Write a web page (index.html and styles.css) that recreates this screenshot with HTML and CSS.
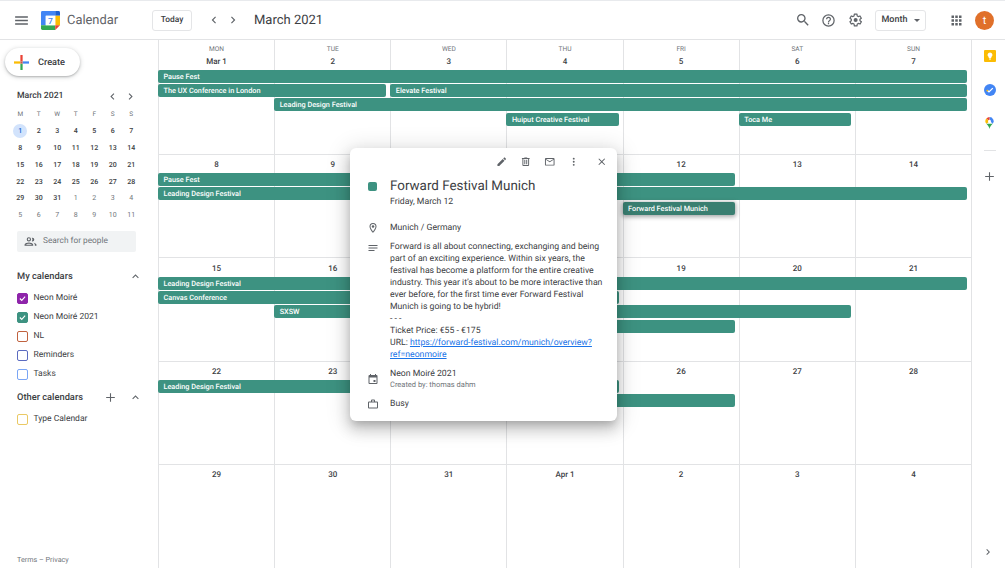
FILE: index.html
```html
<!DOCTYPE html>
<html lang="en">
<head>
<meta charset="utf-8">
<title>Calendar</title>
<link rel="stylesheet" href="styles.css">
</head>
<body>
<div class="app">
  <header class="topbar">
    <svg class="ic menu" viewBox="0 0 24 24"><path d="M3 18h18v-2H3zm0-5h18v-2H3zm0-7v2h18V6z"/></svg>
    <svg class="logo" viewBox="0 0 20 20">
      <path d="M1.5 0H15v5H5v10H0V1.500A1.500 1.500 0 0 1 1.500 0z" fill="#4285f4"/>
      <path d="M15 0h3.500A1.500 1.500 0 0 1 20 1.500V5h-5z" fill="#1a5fd0"/>
      <path d="M15 5h5v10h-5z" fill="#fbbc04"/>
      <path d="M5 15h10v5H1.500A1.500 1.500 0 0 1 0 18.500V15z" fill="#34a853"/>
      <path d="M15 15h5l-5 5z" fill="#ea4335"/>
      <path d="M5 5h10v10H5z" fill="#fff"/>
      <text x="10" y="13.500" text-anchor="middle" class="logo-num">7</text>
    </svg>
    <span class="brand">Calendar</span>
    <button class="btn today">Today</button>
    <svg class="ic nav-prev" viewBox="0 0 24 24"><path d="M15.400 7.400 14 6l-6 6 6 6 1.400-1.400L10.800 12z"/></svg>
    <svg class="ic nav-next" viewBox="0 0 24 24"><path d="M8.600 16.600 10 18l6-6-6-6-1.400 1.400 4.600 4.600z"/></svg>
    <span class="month-title">March 2021</span>
    <svg class="ic act-search" viewBox="0 0 24 24"><path d="M15.500 14h-.79l-.28-.27A6.471 6.471 0 0 0 16 9.500 6.500 6.500 0 1 0 9.500 16c1.610 0 3.090-.59 4.230-1.570l.27.28v.79l5 4.990L20.490 19l-4.990-5zm-6 0C7.010 14 5 11.990 5 9.500S7.010 5 9.500 5 14 7.010 14 9.500 11.990 14 9.500 14z"/></svg>
    <svg class="ic act-help" viewBox="0 0 24 24"><path d="M11 18h2v-2h-2zm1-16a10 10 0 1 0 0 20 10 10 0 0 0 0-20zm0 18a8 8 0 1 1 0-16 8 8 0 0 1 0 16zm0-14a4 4 0 0 0-4 4h2a2 2 0 1 1 4 0c0 2-3 1.750-3 5h2c0-2.250 3-2.500 3-5a4 4 0 0 0-4-4z"/></svg>
    <svg class="ic act-gear" viewBox="0 0 24 24"><path d="M19.400 13a7.500 7.500 0 0 0 0-2l2.100-1.600-2-3.500-2.500 1a7.500 7.500 0 0 0-1.700-1L15 3.300h-4l-.4 2.600a7.500 7.500 0 0 0-1.700 1l-2.500-1-2 3.500L6.500 11a7.500 7.500 0 0 0 0 2l-2.100 1.600 2 3.500 2.500-1a7.500 7.500 0 0 0 1.700 1l.4 2.600h4l.4-2.600a7.500 7.500 0 0 0 1.700-1l2.500 1 2-3.500z" fill="none" stroke="currentColor" stroke-width="1.800" stroke-linejoin="round"/><circle cx="12.950" cy="12" r="3"/></svg>
    <button class="btn view">Month<span class="caret"></span></button>
    <svg class="ic act-apps" viewBox="0 0 24 24"><path d="M4 8h4V4H4zm6 12h4v-4h-4zm-6 0h4v-4H4zm0-6h4v-4H4zm6 0h4v-4h-4zm6-10v4h4V4zm-6 4h4V4h-4zm6 6h4v-4h-4zm0 6h4v-4h-4z"/></svg>
    <span class="avatar">t</span>
  </header>

  <div class="body">
    <aside class="sidebar">
      <button class="create">
        <svg class="create-plus" viewBox="0 0 16 16">
          <path d="M6.800 0h2.400v6.800H6.800z" fill="#ea4335"/>
          <path d="M9.200 6.800H16v2.400H9.200z" fill="#4285f4"/>
          <path d="M6.800 9.200h2.400V16H6.800z" fill="#34a853"/>
          <path d="M0 6.800h6.800v2.400H0z" fill="#fbbc04"/>
          <path d="M6.800 6.800h2.400v2.400H6.800z" fill="#c9574a"/>
        </svg>
        <span>Create</span>
      </button>

      <div class="mini-head">
        <span class="mini-title">March 2021</span>
        <svg class="ic mini-nav" viewBox="0 0 24 24"><path d="M15.400 7.400 14 6l-6 6 6 6 1.400-1.400L10.800 12z"/></svg>
        <svg class="ic mini-nav" viewBox="0 0 24 24"><path d="M8.600 16.600 10 18l6-6-6-6-1.400 1.400 4.600 4.600z"/></svg>
      </div>
      <div class="mini-grid">
        <span class="dow">M</span><span class="dow">T</span><span class="dow">W</span><span class="dow">T</span><span class="dow">F</span><span class="dow">S</span><span class="dow">S</span>
        <span class="today-mini">1</span><span>2</span><span>3</span><span>4</span><span>5</span><span>6</span><span>7</span>
        <span>8</span><span>9</span><span>10</span><span>11</span><span>12</span><span>13</span><span>14</span>
        <span>15</span><span>16</span><span>17</span><span>18</span><span>19</span><span>20</span><span>21</span>
        <span>22</span><span>23</span><span>24</span><span>25</span><span>26</span><span>27</span><span>28</span>
        <span>29</span><span>30</span><span>31</span><span class="off">1</span><span class="off">2</span><span class="off">3</span><span class="off">4</span>
        <span class="off">5</span><span class="off">6</span><span class="off">7</span><span class="off">8</span><span class="off">9</span><span class="off">10</span><span class="off">11</span>
      </div>

      <div class="people">
        <svg class="ic people-ic" viewBox="0 0 24 24"><path d="M9 12a4 4 0 1 0 0-8 4 4 0 0 0 0 8zm0-6a2 2 0 1 1 0 4 2 2 0 0 1 0-4zm6.500 6a3.500 3.500 0 0 0 0-7c-.4 0-.7.100-1 .2a5.800 5.800 0 0 1 0 6.600c.3.100.6.200 1 .2zM9 14c-2.700 0-8 1.300-8 4v2h16v-2c0-2.700-5.300-4-8-4zm-6 4c.2-.7 3.300-2 6-2s5.800 1.300 6 2zm14.600-3.800c1.300.9 2.400 2.100 2.400 3.800v2h3v-2c0-2.100-3.300-3.400-5.400-3.800z"/></svg>
        <span>Search for people</span>
      </div>

      <div class="cal-head first">
        <span>My calendars</span>
        <svg class="ic chev" viewBox="0 0 24 24"><path d="M7.400 15.400 6 14l6-6 6 6-1.400 1.400L12 10.800z"/></svg>
      </div>
      <ul class="cal-list">
        <li><span class="box purple checked"><svg viewBox="0 0 12 12"><path d="m2.500 6 2.500 2.500 4.500-5" /></svg></span>Neon Moiré</li>
        <li><span class="box teal checked"><svg viewBox="0 0 12 12"><path d="m2.500 6 2.500 2.500 4.500-5" /></svg></span>Neon Moiré 2021</li>
        <li><span class="box rust"></span>NL</li>
        <li><span class="box indigo"></span>Reminders</li>
        <li><span class="box sky"></span>Tasks</li>
      </ul>
      <div class="cal-head other">
        <span>Other calendars</span>
        <svg class="ic cal-add" viewBox="0 0 24 24"><path d="M20 13h-7v7h-2v-7H4v-2h7V4h2v7h7z"/></svg>
        <svg class="ic chev" viewBox="0 0 24 24"><path d="M7.400 15.400 6 14l6-6 6 6-1.400 1.400L12 10.800z"/></svg>
      </div>
      <ul class="cal-list other-list">
        <li><span class="box sand"></span>Type Calendar</li>
      </ul>
      <div class="terms">Terms – Privacy</div>
    </aside>

    <main class="month">
      <section class="week week-first">
        <div class="day"><span class="dname">MON</span><span class="dnum">Mar 1</span></div>
        <div class="day"><span class="dname">TUE</span><span class="dnum">2</span></div>
        <div class="day"><span class="dname">WED</span><span class="dnum">3</span></div>
        <div class="day"><span class="dname">THU</span><span class="dnum">4</span></div>
        <div class="day"><span class="dname">FRI</span><span class="dnum">5</span></div>
        <div class="day"><span class="dname">SAT</span><span class="dnum">6</span></div>
        <div class="day"><span class="dname">SUN</span><span class="dnum">7</span></div>
        <div class="ev r2 c1-7">Pause Fest</div>
        <div class="ev r3 c1-2">The UX Conference in London</div>
        <div class="ev r3 c3-7">Elevate Festival</div>
        <div class="ev r4 c2-7">Leading Design Festival</div>
        <div class="ev r5 c4-4">Huiput Creative Festival</div>
        <div class="ev r5 c6-6">Toca Me</div>
      </section>
      <section class="week">
        <div class="day"><span class="dnum">8</span></div>
        <div class="day"><span class="dnum">9</span></div>
        <div class="day"><span class="dnum">10</span></div>
        <div class="day"><span class="dnum">11</span></div>
        <div class="day"><span class="dnum">12</span></div>
        <div class="day"><span class="dnum">13</span></div>
        <div class="day"><span class="dnum">14</span></div>
        <div class="ev r2 c1-5">Pause Fest</div>
        <div class="ev r3 c1-7">Leading Design Festival</div>
        <div class="ev r4 c5-5 selected">Forward Festival Munich</div>
      </section>
      <section class="week">
        <div class="day"><span class="dnum">15</span></div>
        <div class="day"><span class="dnum">16</span></div>
        <div class="day"><span class="dnum">17</span></div>
        <div class="day"><span class="dnum">18</span></div>
        <div class="day"><span class="dnum">19</span></div>
        <div class="day"><span class="dnum">20</span></div>
        <div class="day"><span class="dnum">21</span></div>
        <div class="ev r2 c1-7">Leading Design Festival</div>
        <div class="ev r3 c1-4">Canvas Conference</div>
        <div class="ev r4 c2-6">SXSW</div>
        <div class="ev r5 c4-5"></div>
      </section>
      <section class="week">
        <div class="day"><span class="dnum">22</span></div>
        <div class="day"><span class="dnum">23</span></div>
        <div class="day"><span class="dnum">24</span></div>
        <div class="day"><span class="dnum">25</span></div>
        <div class="day"><span class="dnum">26</span></div>
        <div class="day"><span class="dnum">27</span></div>
        <div class="day"><span class="dnum">28</span></div>
        <div class="ev r2 c1-4">Leading Design Festival</div>
        <div class="ev r3 c4-5"></div>
      </section>
      <section class="week">
        <div class="day"><span class="dnum">29</span></div>
        <div class="day"><span class="dnum">30</span></div>
        <div class="day"><span class="dnum">31</span></div>
        <div class="day"><span class="dnum">Apr 1</span></div>
        <div class="day"><span class="dnum">2</span></div>
        <div class="day"><span class="dnum">3</span></div>
        <div class="day"><span class="dnum">4</span></div>
      </section>
    </main>

    <aside class="rail">
      <svg class="rail-keep" viewBox="0 0 12 12"><rect width="12" height="12" rx="1" fill="#fbbc04"/><path d="M6 2.500a2.500 2.500 0 0 0-1.300 4.600V8h2.600v-.9A2.500 2.500 0 0 0 6 2.500zM5 8.600h2v.9H5z" fill="#fff"/></svg>
      <svg class="rail-tasks" viewBox="0 0 12 12"><circle cx="6" cy="6" r="6" fill="#4285f4"/><path d="m3.300 6.200 1.700 1.700 3.800-3.800" fill="none" stroke="#fff" stroke-width="1.300"/><circle cx="3.300" cy="6.600" r=".9" fill="#fbbc04"/></svg>
      <svg class="rail-maps" viewBox="0 0 12 16"><path d="M6 0a5.500 5.500 0 0 1 4.200 9L6 4.500z" fill="#4285f4"/><path d="M6 0a5.500 5.500 0 0 0-4.200 2L6 6z" fill="#ea4335"/><path d="M1.800 2A5.500 5.500 0 0 0 1.800 9L6 6z" fill="#fbbc04"/><path d="M1.800 9 10.200 9C8 11.500 6.500 13 6 16 5.500 13 4 11.500 1.800 9z" fill="#34a853"/><circle cx="6" cy="5.500" r="1.900" fill="#fff"/></svg>
      <span class="rail-sep"></span>
      <svg class="ic rail-add" viewBox="0 0 24 24"><path d="M20 13h-7v7h-2v-7H4v-2h7V4h2v7h7z"/></svg>
      <svg class="ic rail-open" viewBox="0 0 24 24"><path d="M8.600 16.600 10 18l6-6-6-6-1.400 1.400 4.600 4.600z"/></svg>
    </aside>
  </div>

  <article class="popup">
    <div class="pop-tools">
      <svg class="ic tool" viewBox="0 0 24 24"><path d="M3 17.250V21h3.750L17.800 9.950 14.050 6.200zM20.700 7a1 1 0 0 0 0-1.400l-2.300-2.300a1 1 0 0 0-1.400 0l-1.850 1.850 3.750 3.750z"/></svg>
      <svg class="ic tool" viewBox="0 0 24 24"><path d="M15 4V3H9v1H4v2h1v13a2 2 0 0 0 2 2h10a2 2 0 0 0 2-2V6h1V4zm2 15H7V6h10zM9 8h2v9H9zm4 0h2v9h-2z"/></svg>
      <svg class="ic tool" viewBox="0 0 24 24"><path d="M20 4H4a2 2 0 0 0-2 2v12a2 2 0 0 0 2 2h16a2 2 0 0 0 2-2V6a2 2 0 0 0-2-2zm0 14H4V8l8 5 8-5zm-8-7L4 6h16z"/></svg>
      <svg class="ic tool" viewBox="0 0 24 24"><circle cx="12" cy="5.500" r="2"/><circle cx="12" cy="12" r="2"/><circle cx="12" cy="18.500" r="2"/></svg>
      <svg class="ic tool tool-close" viewBox="0 0 24 24"><path d="M19 6.400 17.600 5 12 10.600 6.400 5 5 6.400 10.600 12 5 17.600 6.400 19l5.600-5.600 5.600 5.600 1.400-1.400-5.600-5.600z"/></svg>
    </div>
    <div class="pop-row pop-title">
      <span class="pop-swatch"></span>
      <div>
        <h2>Forward Festival Munich</h2>
        <p class="pop-date">Friday, March 12</p>
      </div>
    </div>
    <div class="pop-row pop-loc">
      <svg class="ic pop-ic" viewBox="0 0 24 24"><path d="M12 2a7 7 0 0 0-7 7c0 5.250 7 13 7 13s7-7.750 7-13a7 7 0 0 0-7-7zM7 9a5 5 0 0 1 10 0c0 2.900-2.900 7.200-5 9.900C9.900 16.200 7 11.900 7 9z"/><circle cx="12" cy="9" r="2.500"/></svg>
      <p>Munich / Germany</p>
    </div>
    <div class="pop-row pop-desc">
      <svg class="ic pop-ic" viewBox="0 0 24 24"><path d="M3 18h12v-2H3zM3 6v2h18V6zm0 7h18v-2H3z"/></svg>
      <p>Forward is all about connecting, exchanging and being<br>part of an exciting experience. Within six years, the<br>festival has become a platform for the entire creative<br>industry. This year it’s about to be more interactive than<br>ever before, for the first time ever Forward Festival<br>Munich is going to be hybrid!<br>- - -<br>Ticket Price: €55 - €175<br>URL: <a href="#">https://forward-festival.com/munich/overview?<br>ref=neonmoire</a></p>
    </div>
    <div class="pop-row pop-cal">
      <svg class="ic pop-ic" viewBox="0 0 24 24"><path d="M19 4h-1V2h-2v2H8V2H6v2H5a2 2 0 0 0-2 2v14a2 2 0 0 0 2 2h14a2 2 0 0 0 2-2V6a2 2 0 0 0-2-2zm0 16H5V9h14zm-6-6h4v4h-4z"/></svg>
      <div>
        <p>Neon Moiré 2021</p>
        <p class="pop-small">Created by: thomas dahm</p>
      </div>
    </div>
    <div class="pop-row pop-busy">
      <svg class="ic pop-ic" viewBox="0 0 24 24"><path d="M20 7h-4V5a2 2 0 0 0-2-2h-4a2 2 0 0 0-2 2v2H4a2 2 0 0 0-2 2v10a2 2 0 0 0 2 2h16a2 2 0 0 0 2-2V9a2 2 0 0 0-2-2zM10 5h4v2h-4zm10 14H4V9h16z"/></svg>
      <p>Busy</p>
    </div>
  </article>
</div>
</body>
</html>
```

FILE: styles.css
```css
* { box-sizing: border-box; }
html, body { margin: 0; height: 100%; overflow: hidden; background: #fff; }
body { font-family: Roboto, "Liberation Sans", sans-serif; color: #3c4043; text-rendering: geometricPrecision; }
p, h2, ul { margin: 0; padding: 0; }
button { font-family: inherit; background: #fff; cursor: pointer; text-rendering: geometricPrecision; }

.app { position: relative; width: 1005px; height: 568px; display: flex; flex-direction: column; }
.ic { fill: #5f6368; color: #5f6368; flex: none; display: block; }

/* top bar */
.topbar { height: 40px; flex: none; display: flex; align-items: center; border-top: 1px solid #e8eaed; border-bottom: 1px solid #e2e3e5; padding-left: 13px; }
.menu { width: 17px; height: 17px; }
.logo { width: 19px; height: 19px; margin-left: 11px; flex: none; }
.logo-num { font: 500 9px Roboto, sans-serif; fill: #4285f4; }
.brand { margin-left: 7px; font-size: 12.900px; color: #5f6368; width: 85px; }
.btn { height: 21px; border: 1px solid #e4e5e7; border-radius: 3px; font-size: 9px; font-weight: 500; color: #3c4043; padding: 0; }
.today { width: 40px; font-size: 8.400px; }
.nav-prev { width: 14px; height: 14px; margin-left: 15px; }
.nav-next { width: 14px; height: 14px; margin-left: 5px; }
.month-title { margin-left: 14px; font-size: 13px; color: #3c4043; flex: 1; }
.act-search { width: 16px; height: 16px; }
.act-help { width: 15px; height: 15px; margin-left: 10px; }
.act-gear { width: 16px; height: 16px; margin-left: 11px; }
.view { width: 51px; margin-left: 12px; display: flex; align-items: center; justify-content: center; gap: 6px; }
.caret { width: 0; height: 0; border: 3px solid transparent; border-top-color: #5f6368; border-bottom: 0; }
.act-apps { width: 15px; height: 15px; margin-left: 23px; }
.avatar { width: 19px; height: 19px; border-radius: 50%; background: #e0702a; color: #fff; font-size: 11px; display: flex; align-items: center; justify-content: center; margin-left: 11px; margin-right: 11px; }

.body { flex: 1; display: flex; min-height: 0; }

/* sidebar */
.sidebar { width: 158px; flex: none; display: flex; flex-direction: column; padding: 8px 16px 0 17px; position: relative; }
.create { width: 75px; height: 28px; margin-left: -12px; border: 0; border-radius: 14px; display: flex; align-items: center; gap: 9px; padding: 0 0 0 9px; font-size: 9.200px; font-weight: 500; color: #3c4043; box-shadow: 0 1px 2px rgba(60,64,67,.3), 0 1px 4px 1px rgba(60,64,67,.15); }
.create-plus { width: 15px; height: 15px; flex: none; }
.mini-head { display: flex; align-items: center; height: 14px; margin-top: 13px; }
.mini-title { font-size: 8.700px; font-weight: 500; color: #3c4043; width: 90px; }
.mini-nav { width: 13px; height: 13px; margin-right: 5px; }
.mini-grid { display: grid; grid-template-columns: repeat(7, 18.500px); grid-auto-rows: 16.800px; width: 130px; margin-left: -6px; margin-top: 3px; font-size: 7px; font-weight: 500; color: #3c4043; }
.mini-grid span { display: flex; align-items: center; justify-content: center; }
.mini-grid .dow { font-size: 6.500px; color: #70757a; font-weight: 400; }
.mini-grid .off { color: #70757a; font-weight: 400; }
.mini-grid .today-mini { background: #d2e3fc; color: #1967d2; border-radius: 50%; width: 14px; height: 14px; justify-self: center; align-self: center; }
.people { width: 119px; height: 21px; background: #f1f3f4; border-radius: 2px; margin-top: 7px; display: flex; align-items: center; gap: 6px; padding-left: 7px; font-size: 8.300px; color: #70757a; }
.people-ic { width: 13px; height: 13px; }
.cal-head { display: flex; align-items: center; height: 14px; font-size: 9.300px; font-weight: 500; color: #3c4043; }
.cal-head.first { margin-top: 18px; }
.cal-head.other { margin-top: 7px; }
.cal-head span { flex: 1; }
.chev { width: 13px; height: 13px; margin-right: 0; }
.cal-add { width: 13px; height: 13px; margin-right: 7px; }
.cal-head .cal-add { margin-right: 7px; margin-left: -5px; margin-right: 12px; }
.cal-list { list-style: none; margin-top: 5px; }
.cal-list.other-list { margin-top: 5px; }
.cal-list li { height: 19px; display: flex; align-items: center; gap: 5.500px; font-size: 8.500px; color: #3c4043; }
.box { width: 11px; height: 11px; border-radius: 2px; border: 1.500px solid; flex: none; display: block; }
.box svg { display: block; width: 100%; height: 100%; fill: none; stroke: #fff; stroke-width: 1.500; }
.purple { border-color: #8e24aa; background: #8e24aa; }
.teal { border-color: #3d9281; background: #3d9281; }
.rust { border-color: #c0623f; }
.indigo { border-color: #5b6bc0; }
.sky { border-color: #7aa5f5; }
.sand { border-color: #eac964; }
.terms { margin-top: auto; margin-bottom: 4px; font-size: 7.200px; color: #70757a; }

/* month grid */
.month { width: 814px; flex: none; display: grid; grid-template-rows: 114.500px 103.500px 103.500px 103px 1fr; border-right: 1px solid #e2e3e5; }
.week { display: grid; grid-template-columns: repeat(7, 1fr); grid-template-rows: 18.500px repeat(4, 14.400px) 1fr; border-bottom: 1px solid #e2e3e5; min-height: 0; }
.week-first { grid-template-rows: 29.500px repeat(4, 14.400px) 1fr; }
.week:last-child { border-bottom: 0; }
.day { grid-row: 1 / -1; border-left: 1px solid #e2e3e5; display: flex; flex-direction: column; align-items: center; padding-top: 4.500px; font-size: 8px; font-weight: 500; color: #3c4043; }
.week-first .day { padding-top: 5px; }
.day:nth-child(1) { grid-column: 1; }
.day:nth-child(2) { grid-column: 2; }
.day:nth-child(3) { grid-column: 3; }
.day:nth-child(4) { grid-column: 4; }
.day:nth-child(5) { grid-column: 5; }
.day:nth-child(6) { grid-column: 6; }
.day:nth-child(7) { grid-column: 7; }
.dname { font-size: 6.600px; line-height: 9px; color: #70757a; font-weight: 400; margin-bottom: 2px; }
.dnum { line-height: 11px; }
.ev { z-index: 1; height: 13px; margin-right: 4px; background: #3d9281; color: #fff; border-radius: 2px; font-size: 7.300px; font-weight: 500; line-height: 13px; padding-left: 5.500px; white-space: nowrap; overflow: hidden; }
.r2 { grid-row: 2; } .r3 { grid-row: 3; } .r4 { grid-row: 4; } .r5 { grid-row: 5; }
.c1-7 { grid-column: 1 / 8; } .c1-2 { grid-column: 1 / 3; } .c3-7 { grid-column: 3 / 8; } .c2-7 { grid-column: 2 / 8; }
.c4-4 { grid-column: 4 / 5; } .c6-6 { grid-column: 6 / 7; } .c1-5 { grid-column: 1 / 6; } .c5-5 { grid-column: 5 / 6; }
.c1-4 { grid-column: 1 / 5; } .c2-6 { grid-column: 2 / 7; } .c4-5 { grid-column: 4 / 6; }
.selected { background: #3a7f71; box-shadow: 0 1px 4px 1px rgba(60,64,67,.45); }

/* right rail */
.rail { flex: 1; display: flex; flex-direction: column; align-items: center; padding: 10px 0 10px 2px; }
.rail-keep { width: 12px; height: 12px; }
.rail-tasks { width: 12px; height: 12px; margin-top: 22px; }
.rail-maps { width: 9px; height: 12px; margin-top: 21px; }
.rail-sep { width: 12px; height: 1px; background: #e2e3e5; margin-top: 21px; }
.rail-add { width: 13px; height: 13px; margin-top: 19px; }
.rail-open { width: 12px; height: 12px; margin-top: auto; margin-left: -3px; }

/* popup */
.popup { position: absolute; z-index: 5; left: 350px; top: 148px; width: 267px; height: 273px; background: #fff; border-radius: 6px; box-shadow: 0 8px 14px 2px rgba(0,0,0,.14), 0 3px 22px 4px rgba(0,0,0,.12), 0 5px 8px -3px rgba(0,0,0,.2); padding: 7px 0 0 17px; font-size: 8.700px; color: #3c4043; }
.pop-tools { display: flex; justify-content: flex-end; align-items: center; height: 14px; padding-right: 9.500px; gap: 12.500px; }
.tool { width: 11.500px; height: 11.500px; }
.tool-close { margin-left: 4.500px; }
.pop-row { display: grid; grid-template-columns: 11px 1fr; column-gap: 12px; }
.pop-title { margin-top: 8px; align-items: start; }
.pop-title h2 { font-size: 13.400px; font-weight: 400; line-height: 19px; color: #3c4043; }
.pop-swatch { width: 9px; height: 9px; border-radius: 2px; background: #3d9281; margin: 5px 0 0 1px; }
.pop-date { font-size: 8.700px; line-height: 12px; }
.pop-loc { margin-top: 14px; align-items: center; line-height: 12px; }
.pop-ic { width: 12px; height: 12px; margin-left: -.5px; }
.pop-desc { margin-top: 7px; line-height: 12px; }
.pop-desc .pop-ic { margin-top: 1px; }
.pop-desc a { color: #1a73e8; }
.pop-cal { margin-top: 7px; line-height: 12px; align-items: center; }
.pop-small { font-size: 7.500px; line-height: 10px; color: #70757a; }
.pop-busy { margin-top: 8px; line-height: 12px; align-items: center; }
```
